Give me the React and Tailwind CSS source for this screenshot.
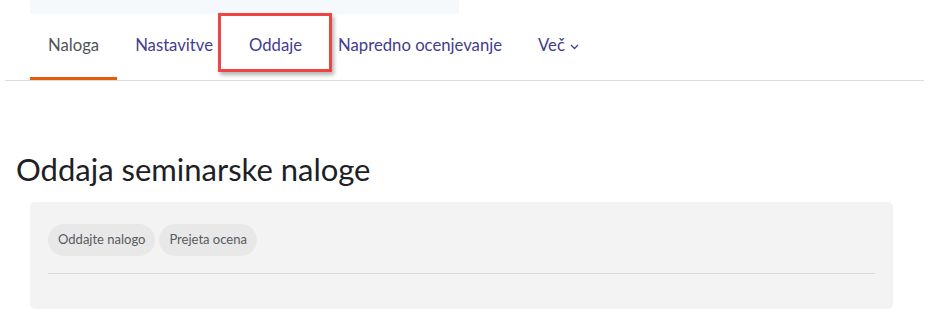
import React from "react";

const tabs = [
  { label: "Naloga", active: true },
  { label: "Nastavitve" },
  { label: "Oddaje" },
  { label: "Napredno ocenjevanje" },
];

export default function App() {
  return (
    <div
      className="relative w-[929px] h-[330px] bg-white overflow-hidden"
      style={{ fontFamily: "Lato, 'Noto Sans', sans-serif" }}
    >
      <div className="ml-[30px] w-[429px] h-[14px] bg-[#f5f9fc]" />
      <nav className="mx-[5px] border-b border-[#dcdcdc]">
        <ul className="flex pl-[25px] h-[66px]">
          {tabs.map((t) => (
            <li
              key={t.label}
              className={
                "flex items-center px-[18px] text-[16.7px] border-b-[3px] " +
                (t.active
                  ? "border-[#e65b07] text-[#505459]"
                  : "border-transparent text-[#433e8c]")
              }
            >
              {t.label}
            </li>
          ))}
          <li className="flex items-center gap-[5px] px-[18px] text-[16.7px] border-b-[3px] border-transparent text-[#433e8c]">
            Več
            <svg width="9" height="6" viewBox="0 0 9 6" className="mt-[2px]">
              <path d="M1 1l3.5 3.5L8 1" fill="none" stroke="currentColor" strokeWidth="1.3" />
            </svg>
          </li>
        </ul>
      </nav>

      <h2 className="mt-[70px] ml-[16px] text-[31px] leading-[36px] text-[#1d2125]">
        Oddaja seminarske naloge
      </h2>

      <div className="mt-[15px] ml-[30px] w-[863px] rounded-[5px] bg-[#f3f3f3] pt-[22px] px-[18px] pb-[35px]">
        <div className="flex gap-[4px]">
          <span className="h-[32px] flex items-center px-[10px] rounded-full bg-[#e8e8e8] text-[13px] text-[#555a60]">
            Oddajte nalogo
          </span>
          <span className="h-[32px] flex items-center px-[10px] rounded-full bg-[#e8e8e8] text-[13px] text-[#555a60]">
            Prejeta ocena
          </span>
        </div>
        <div className="mt-[17px] border-t border-[#d9d9d9]" />
      </div>

      <div className="absolute left-[218px] top-[13px] w-[114px] h-[59px] border-[3px] border-[#ef4444] shadow-[2px_3px_4px_rgba(0,0,0,0.3)]" />
    </div>
  );
}
